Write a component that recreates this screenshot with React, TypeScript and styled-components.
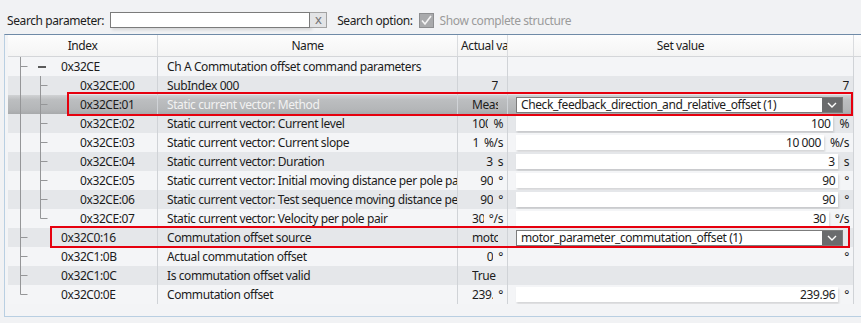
import React from "react";
import styled, { createGlobalStyle } from "styled-components";

const GlobalStyle = createGlobalStyle`
  html, body { margin: 0; padding: 0; background: #f1f2f4; }
  body {
    font-family: "Noto Sans", "Open Sans", sans-serif;
    font-size: 12px;
    letter-spacing: -0.4px;
    color: #1c1c1c;
  }
`;

const Page = styled.div`
  position: relative;
  width: 861px;
  height: 323px;
  overflow: hidden;
`;

const Toolbar = styled.div`
  display: flex;
  align-items: center;
  height: 34px;
  padding: 6px 0 0 7px;
  box-sizing: border-box;
`;

const Label = styled.span<{ $muted?: boolean }>`
  white-space: nowrap;
  color: ${(p) => (p.$muted ? "#9b9b9b" : "#1c1c1c")};
  margin-right: 6px;
`;

const SearchInput = styled.div`
  width: 200px;
  height: 16px;
  box-sizing: border-box;
  background: #fff;
  border: 1px solid #7b7b7b;
  box-shadow: 2px 2px 3px rgba(0, 0, 0, 0.12);
`;

const ClearButton = styled.div`
  width: 17px;
  height: 16px;
  box-sizing: border-box;
  background: #e3e4e6;
  border: 1px solid #a3a3a3;
  border-left: none;
  color: #727272;
  display: flex;
  align-items: center;
  justify-content: center;
  font-size: 13px;
  line-height: 1;
  padding-bottom: 2px;
  margin-right: 10px;
`;

const CheckBox = styled.div`
  width: 15px;
  height: 15px;
  box-sizing: border-box;
  background: #a9aaac;
  border: 1px solid #8d8e90;
  display: flex;
  align-items: center;
  justify-content: center;
  margin-right: 6px;
`;

const Panel = styled.div`
  margin-left: 4px;
  height: 283px;
  box-sizing: border-box;
  border-top: 1px solid #6f8aa7;
  border-left: 1px solid #b9cfe2;
  border-bottom: 1px solid #b9cfe2;
  background: #f3f4f6;
  padding-left: 3px;
`;

const Grid = "150px 300px 50px 346px 1fr";

const HeaderRow = styled.div`
  display: grid;
  grid-template-columns: ${Grid};
  height: 22px;
  box-sizing: border-box;
  background: linear-gradient(#fdfdfd, #f4f4f4);
  border-bottom: 1px solid #d4d6d9;
`;

const HeaderCell = styled.div`
  line-height: 21px;
  text-align: center;
  padding: 0 3px;
  overflow: hidden;
  white-space: nowrap;
  border-right: 1px solid #dadcdf;
  &:last-child { border-right: none; }
`;

const Row = styled.div<{ $odd: boolean; $selected?: boolean }>`
  display: grid;
  grid-template-columns: ${Grid};
  height: 19px;
  background: ${(p) =>
    p.$selected
      ? "linear-gradient(#d0d2d4 0%, #bcbec0 25%, #b4b6b8 75%, #a7a9ab 100%)"
      : p.$odd
      ? "#e5e7ea"
      : "#f4f5f7"};
`;

const Cell = styled.div<{ $pl?: number; $pr?: number; $light?: boolean; $filler?: boolean }>`
  display: flex;
  align-items: center;
  min-width: 0;
  overflow: hidden;
  white-space: nowrap;
  padding: 0 ${(p) => p.$pr ?? 0}px 0 ${(p) => p.$pl ?? 0}px;
  border-right: ${(p) => (p.$filler ? "none" : "1px solid #d0d3d7")};
  color: ${(p) => (p.$light ? "#f2f2f2" : "#1c1c1c")};
  background: ${(p) => (p.$filler ? "#f3f4f6" : "transparent")};
`;

const IndexText = styled.span`
  white-space: nowrap;
`;

const Value = styled.span<{ $align: "left" | "right" }>`
  flex: 1;
  min-width: 0;
  overflow: hidden;
  white-space: nowrap;
  text-align: ${(p) => p.$align};
`;

const Unit = styled.span<{ $gap: number }>`
  flex: none;
  margin-left: ${(p) => p.$gap}px;
  white-space: nowrap;
`;

const Field = styled.div`
  flex: 1;
  height: 15px;
  box-sizing: border-box;
  background: #fff;
  box-shadow: 1px 2px 2px rgba(0, 0, 0, 0.13);
  text-align: right;
  padding-right: 3px;
  line-height: 15px;
  overflow: hidden;
`;

const Spacer = styled.div`
  flex: 1;
`;

const Select = styled.div`
  flex: 1;
  display: flex;
  height: 16px;
  box-sizing: border-box;
  margin-right: 6px;
  background: #fff;
  border: 1px solid #7c7c7c;
`;

const SelectText = styled.span`
  flex: 1;
  padding-left: 4px;
  line-height: 14px;
  overflow: hidden;
  color: #1c1c1c;
`;

const SelectButton = styled.div`
  width: 20px;
  background: #6a6b6d;
  display: flex;
  align-items: center;
  justify-content: center;
`;

const Callout = styled.div<{ $x: number; $y: number; $w: number; $h: number }>`
  position: absolute;
  left: ${(p) => p.$x}px;
  top: ${(p) => p.$y}px;
  width: ${(p) => p.$w}px;
  height: ${(p) => p.$h}px;
  box-sizing: border-box;
  border: 2px solid #e6000e;
  pointer-events: none;
`;

type Guide = "tee" | "end";
type SetVal =
  | { kind: "field"; value: string; unit?: string }
  | { kind: "select"; value: string }
  | { kind: "text"; value: string }
  | { kind: "unit"; unit: string }
  | { kind: "none" };

interface Param {
  index: string;
  level: 0 | 1;
  guide: Guide;
  expander?: boolean;
  name: string;
  actual?: { value: string; unit?: string; align: "left" | "right" };
  set: SetVal;
  selected?: boolean;
}

const rows: Param[] = [
  { index: "0x32CE", level: 0, guide: "tee", expander: true, name: "Ch A Commutation offset command parameters", set: { kind: "none" } },
  { index: "0x32CE:00", level: 1, guide: "tee", name: "SubIndex 000", actual: { value: "7", align: "right" }, set: { kind: "text", value: "7" } },
  { index: "0x32CE:01", level: 1, guide: "tee", name: "Static current vector: Method", actual: { value: "Measured", align: "left" }, set: { kind: "select", value: "Check_feedback_direction_and_relative_offset (1)" }, selected: true },
  { index: "0x32CE:02", level: 1, guide: "tee", name: "Static current vector: Current level", actual: { value: "100", unit: "%", align: "right" }, set: { kind: "field", value: "100", unit: "%" } },
  { index: "0x32CE:03", level: 1, guide: "tee", name: "Static current vector: Current slope", actual: { value: "1", unit: "%/s", align: "right" }, set: { kind: "field", value: "10 000", unit: "%/s" } },
  { index: "0x32CE:04", level: 1, guide: "tee", name: "Static current vector: Duration", actual: { value: "3", unit: "s", align: "right" }, set: { kind: "field", value: "3", unit: "s" } },
  { index: "0x32CE:05", level: 1, guide: "tee", name: "Static current vector: Initial moving distance per pole pair", actual: { value: "90", unit: "°", align: "right" }, set: { kind: "field", value: "90", unit: "°" } },
  { index: "0x32CE:06", level: 1, guide: "tee", name: "Static current vector: Test sequence moving distance per pole pair", actual: { value: "90", unit: "°", align: "right" }, set: { kind: "field", value: "90", unit: "°" } },
  { index: "0x32CE:07", level: 1, guide: "end", name: "Static current vector: Velocity per pole pair", actual: { value: "30", unit: "°/s", align: "right" }, set: { kind: "field", value: "30", unit: "°/s" } },
  { index: "0x32C0:16", level: 0, guide: "tee", name: "Commutation offset source", actual: { value: "motor_parameter_commutation_offset", align: "left" }, set: { kind: "select", value: "motor_parameter_commutation_offset (1)" } },
  { index: "0x32C1:0B", level: 0, guide: "tee", name: "Actual commutation offset", actual: { value: "0", unit: "°", align: "right" }, set: { kind: "unit", unit: "°" } },
  { index: "0x32C1:0C", level: 0, guide: "tee", name: "Is commutation offset valid", actual: { value: "True", align: "left" }, set: { kind: "none" } },
  { index: "0x32C0:0E", level: 0, guide: "end", name: "Commutation offset", actual: { value: "239.96", unit: "°", align: "right" }, set: { kind: "field", value: "239.96", unit: "°" } },
];

const LINE = "#959698";

const TreeGuide = ({ row }: { row: Param }) => {
  const w = row.level === 0 ? 53 : 72;
  const branchX = row.level === 0 ? 12.5 : 32.5;
  return (
    <svg width={w} height={19} style={{ flex: "none" }}>
      {row.level === 1 && <line x1={12.5} y1={0} x2={12.5} y2={19} stroke={LINE} />}
      <line x1={branchX} y1={0} x2={branchX} y2={row.guide === "end" ? 9.5 : 19} stroke={LINE} />
      <line x1={branchX} y1={9.5} x2={branchX + 7} y2={9.5} stroke={LINE} />
      {row.expander && <rect x={30} y={9} width={8} height={2} fill="#5a5a5a" />}
    </svg>
  );
};

const Chevron = () => (
  <svg width="10" height="6" viewBox="0 0 10 6">
    <path d="M1 1 L5 5 L9 1" fill="none" stroke="#fff" strokeWidth="1.4" />
  </svg>
);

const SetCell = ({ set }: { set: SetVal }) => {
  switch (set.kind) {
    case "field":
      return (
        <>
          <Field>{set.value}</Field>
          {set.unit && <Unit $gap={6}>{set.unit}</Unit>}
        </>
      );
    case "select":
      return (
        <Select>
          <SelectText>{set.value}</SelectText>
          <SelectButton>
            <Chevron />
          </SelectButton>
        </Select>
      );
    case "text":
      return <Value $align="right">{set.value}</Value>;
    case "unit":
      return (
        <>
          <Spacer />
          <Unit $gap={6}>{set.unit}</Unit>
        </>
      );
    default:
      return null;
  }
};

export default function App() {
  return (
    <Page>
      <GlobalStyle />
      <Toolbar>
        <Label>Search parameter:</Label>
        <SearchInput />
        <ClearButton>x</ClearButton>
        <Label>Search option:</Label>
        <CheckBox>
          <svg width="13" height="13" viewBox="0 0 13 13">
            <path d="M2 6.5 L5 10 L11 2" fill="none" stroke="#f4f4f4" strokeWidth="1.6" />
          </svg>
        </CheckBox>
        <Label $muted>Show complete structure</Label>
      </Toolbar>
      <Panel>
        <HeaderRow>
          <HeaderCell>Index</HeaderCell>
          <HeaderCell>Name</HeaderCell>
          <HeaderCell>Actual value</HeaderCell>
          <HeaderCell>Set value</HeaderCell>
          <HeaderCell />
        </HeaderRow>
        {rows.map((r, i) => (
          <Row key={r.index} $odd={i % 2 === 1} $selected={r.selected}>
            <Cell>
              <TreeGuide row={r} />
              <IndexText>{r.index}</IndexText>
            </Cell>
            <Cell $pl={9} $pr={4} $light={r.selected}>
              {r.name}
            </Cell>
            <Cell $pl={14} $pr={4}>
              {r.actual && (
                <>
                  <Value $align={r.actual.align}>{r.actual.value}</Value>
                  <Unit $gap={5}>{r.actual.unit ?? ""}</Unit>
                </>
              )}
            </Cell>
            <Cell $pl={8} $pr={4}>
              <SetCell set={r.set} />
            </Cell>
            <Cell $filler />
          </Row>
        ))}
      </Panel>
      <Callout $x={67} $y={92} $w={786} $h={24} />
      <Callout $x={50} $y={226} $w={800} $h={22} />
    </Page>
  );
}
